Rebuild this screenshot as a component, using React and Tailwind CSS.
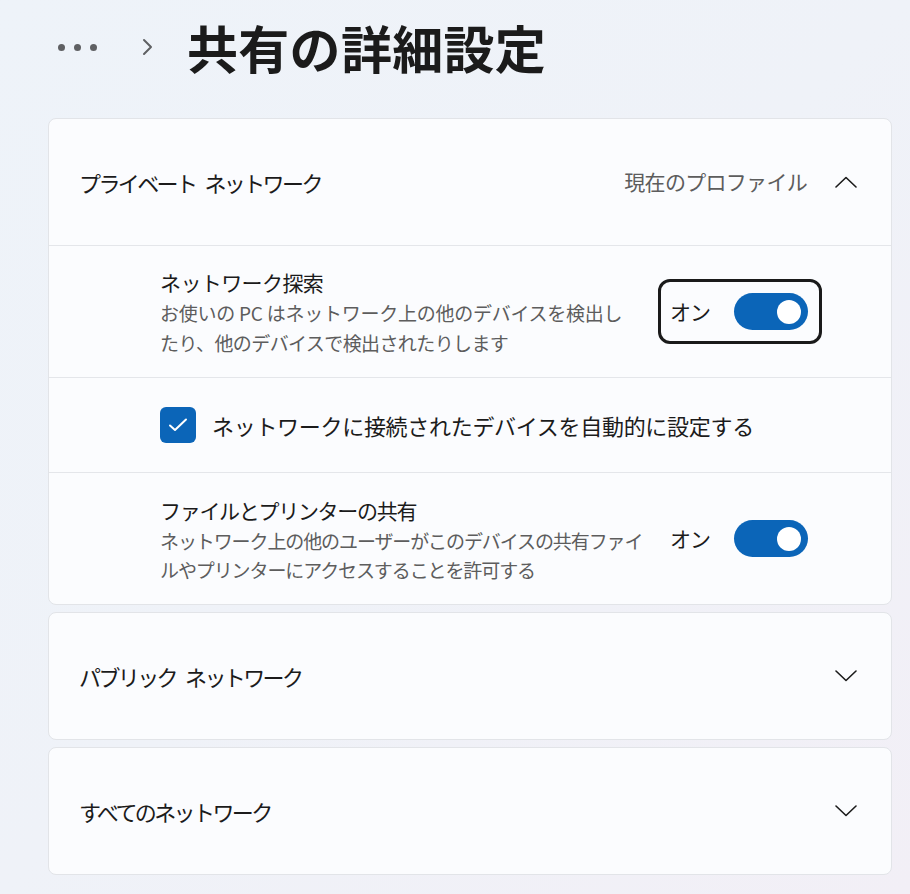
const jp = { fontFamily: '"Noto Sans CJK JP", "Noto Sans", sans-serif' };

function ChevronUp() {
  return (
    <svg width="22" height="12" viewBox="0 0 22 12" fill="none">
      <path d="M1 11 L11 1.5 L21 11" stroke="#1b1b1b" strokeWidth="1.6" strokeLinecap="round" strokeLinejoin="round" />
    </svg>
  );
}

function ChevronDown() {
  return (
    <svg width="22" height="12" viewBox="0 0 22 12" fill="none">
      <path d="M1 1 L11 10.5 L21 1" stroke="#1b1b1b" strokeWidth="1.6" strokeLinecap="round" strokeLinejoin="round" />
    </svg>
  );
}

function Toggle({ focused }) {
  return (
    <div
      className={`flex items-center h-[65px] w-[164px] rounded-[12px] border-[3px] pl-[9px] pr-[11px] justify-between ${
        focused ? 'border-[#1a1a1a]' : 'border-transparent'
      }`}
    >
      <span className="text-[21px] text-[#1b1b1b] tracking-[-1px]">オン</span>
      <div className="w-[74px] h-[37px] rounded-full bg-[#0b65b8] flex items-center justify-end pr-[7px]">
        <div className="w-[24px] h-[24px] rounded-full bg-white" />
      </div>
    </div>
  );
}

// Words split so the narrow space between them survives the tight tracking
function Label({ words }) {
  return (
    <span className="flex items-center gap-[9px] text-[22px] text-[#1b1b1b] tracking-[-2.6px]">
      {words.map(w => (
        <span key={w}>{w}</span>
      ))}
    </span>
  );
}

function CollapsedCard({ words }) {
  return (
    <div className="h-[128px] rounded-[8px] border border-[#e2e4e8] bg-[#fbfcfe] flex items-center justify-between pl-[30px] pr-[34px]">
      <Label words={words} />
      <ChevronDown />
    </div>
  );
}

export default function App() {
  return (
    <div className="min-h-[894px] bg-gradient-to-br from-[#eef3f9] via-[#eff2f8] to-[#f2eff6] pl-[48px] pr-[18px] pb-[18px]" style={jp}>
      {/* breadcrumb */}
      <div className="h-[98px] flex items-center pb-[4px]">
        <div className="flex items-center gap-[9px] pl-[10px]">
          <span className="w-[7px] h-[7px] rounded-full bg-[#5f6063]" />
          <span className="w-[7px] h-[7px] rounded-full bg-[#5f6063]" />
          <span className="w-[7px] h-[7px] rounded-full bg-[#5f6063]" />
        </div>
        <svg className="ml-[45px]" width="12" height="18" viewBox="0 0 12 18" fill="none">
          <path d="M2 2 L9 9 L2 16" stroke="#5f6063" strokeWidth="2" strokeLinecap="round" strokeLinejoin="round" />
        </svg>
        <h1 className="ml-[33px] text-[51px] font-bold text-[#1b1b1b] leading-none tracking-[0.3px]">共有の詳細設定</h1>
      </div>

      <div className="mt-[20px] flex flex-col gap-[7px]">
        {/* private network */}
        <div className="rounded-[8px] border border-[#e2e4e8] bg-[#fbfcfe] overflow-hidden">
          <div className="h-[127px] flex items-center justify-between pl-[30px] pr-[34px] border-b border-[#e4e6ea]">
            <Label words={['プライベート', 'ネットワーク']} />
            <div className="flex items-center gap-[28px]">
              <span className="text-[21px] text-[#5d5d5d] tracking-[-0.7px]">現在のプロファイル</span>
              <ChevronUp />
            </div>
          </div>

          <div className="h-[132px] flex items-center justify-between pl-[111px] pr-[69px] border-b border-[#e4e6ea]">
            <div className="flex flex-col">
              <span className="text-[21px] leading-[32px] text-[#1b1b1b] tracking-[-0.6px]">ネットワーク探索</span>
              <span className="text-[19px] leading-[30px] text-[#5d5d5d] tracking-[-0.25px] whitespace-nowrap">
                お使いの PC はネットワーク上の他のデバイスを検出し
              </span>
              <span className="text-[19px] leading-[30px] text-[#5d5d5d] tracking-[-0.6px] whitespace-nowrap">
                たり、他のデバイスで検出されたりします
              </span>
            </div>
            <Toggle focused />
          </div>

          <div className="h-[95px] flex items-center gap-[16px] pl-[111px] border-b border-[#e4e6ea]">
            <div className="w-[36px] h-[36px] rounded-[6px] bg-[#0b65b8] flex items-center justify-center">
              <svg width="20" height="16" viewBox="0 0 20 16" fill="none">
                <path d="M2 8.5 L7 13 L18 2.5" stroke="white" strokeWidth="2" strokeLinecap="round" strokeLinejoin="round" />
              </svg>
            </div>
            <span className="text-[22px] text-[#1b1b1b] tracking-[-0.3px]">ネットワークに接続されたデバイスを自動的に設定する</span>
          </div>

          <div className="h-[131px] flex items-center justify-between pl-[111px] pr-[69px]">
            <div className="flex flex-col">
              <span className="text-[21px] leading-[32px] text-[#1b1b1b] tracking-[-1.3px]">ファイルとプリンターの共有</span>
              <span className="text-[19px] leading-[30px] text-[#5d5d5d] tracking-[-1.1px] whitespace-nowrap">
                ネットワーク上の他のユーザーがこのデバイスの共有ファイ
              </span>
              <span className="text-[19px] leading-[28px] text-[#5d5d5d] tracking-[-1.1px] whitespace-nowrap">
                ルやプリンターにアクセスすることを許可する
              </span>
            </div>
            <Toggle />
          </div>
        </div>

        <CollapsedCard words={['パブリック', 'ネットワーク']} />
        <CollapsedCard words={['すべてのネットワーク']} />
      </div>
    </div>
  );
}
